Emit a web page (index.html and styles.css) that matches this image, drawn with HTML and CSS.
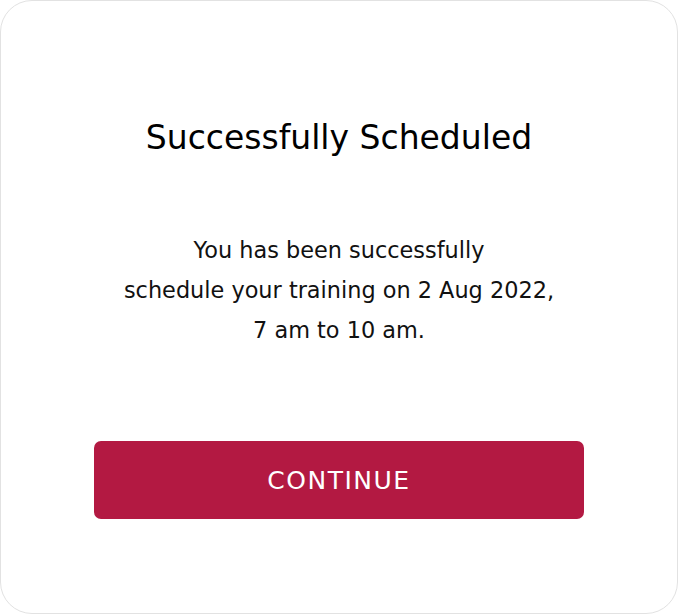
FILE: index.html
```html
<!DOCTYPE html>
<html lang="en">

<head>
    <meta charset="UTF-8">
    <meta name="viewport" content="width=device-width, initial-scale=1.0">
    <title>Successfully Scheduled</title>
    <link rel="stylesheet" href="styles.css">
</head>

<body>
    <div class="modal">
        <h1 class="modal-title">Successfully Scheduled</h1>
        <p class="modal-text">
            You has been successfully<br>
            schedule your training on 2 Aug 2022,<br>
            7 am to 10 am.
        </p>
        <button class="btn-continue">CONTINUE</button>
    </div>
</body>

</html>
```

FILE: styles.css
```css
* {
    box-sizing: border-box;
}

body {
    font-family: "DejaVu Sans", "Noto Sans", Arial, sans-serif;
    background-color: #fff;
    color: #000;
    margin: 0;
}

.modal {
    display: flex;
    flex-direction: column;
    align-items: center;
    width: 678px;
    height: 614px;
    padding-top: 119px;
    border: 1px solid #e2e2e2;
    border-radius: 32px;
    background-color: #fff;
}

.modal-title {
    margin: 0;
    font-size: 33px;
    line-height: 36px;
    font-weight: normal;
}

.modal-text {
    margin: 74px 0 0;
    font-size: 22.4px;
    line-height: 40px;
    text-align: center;
    color: #111;
}

.btn-continue {
    width: 490px;
    height: 78px;
    margin-top: 91px;
    border: none;
    border-radius: 7px;
    background-color: #b31942;
    color: #fff;
    font-family: inherit;
    font-size: 25px;
    letter-spacing: 1.5px;
    cursor: pointer;
}
```
